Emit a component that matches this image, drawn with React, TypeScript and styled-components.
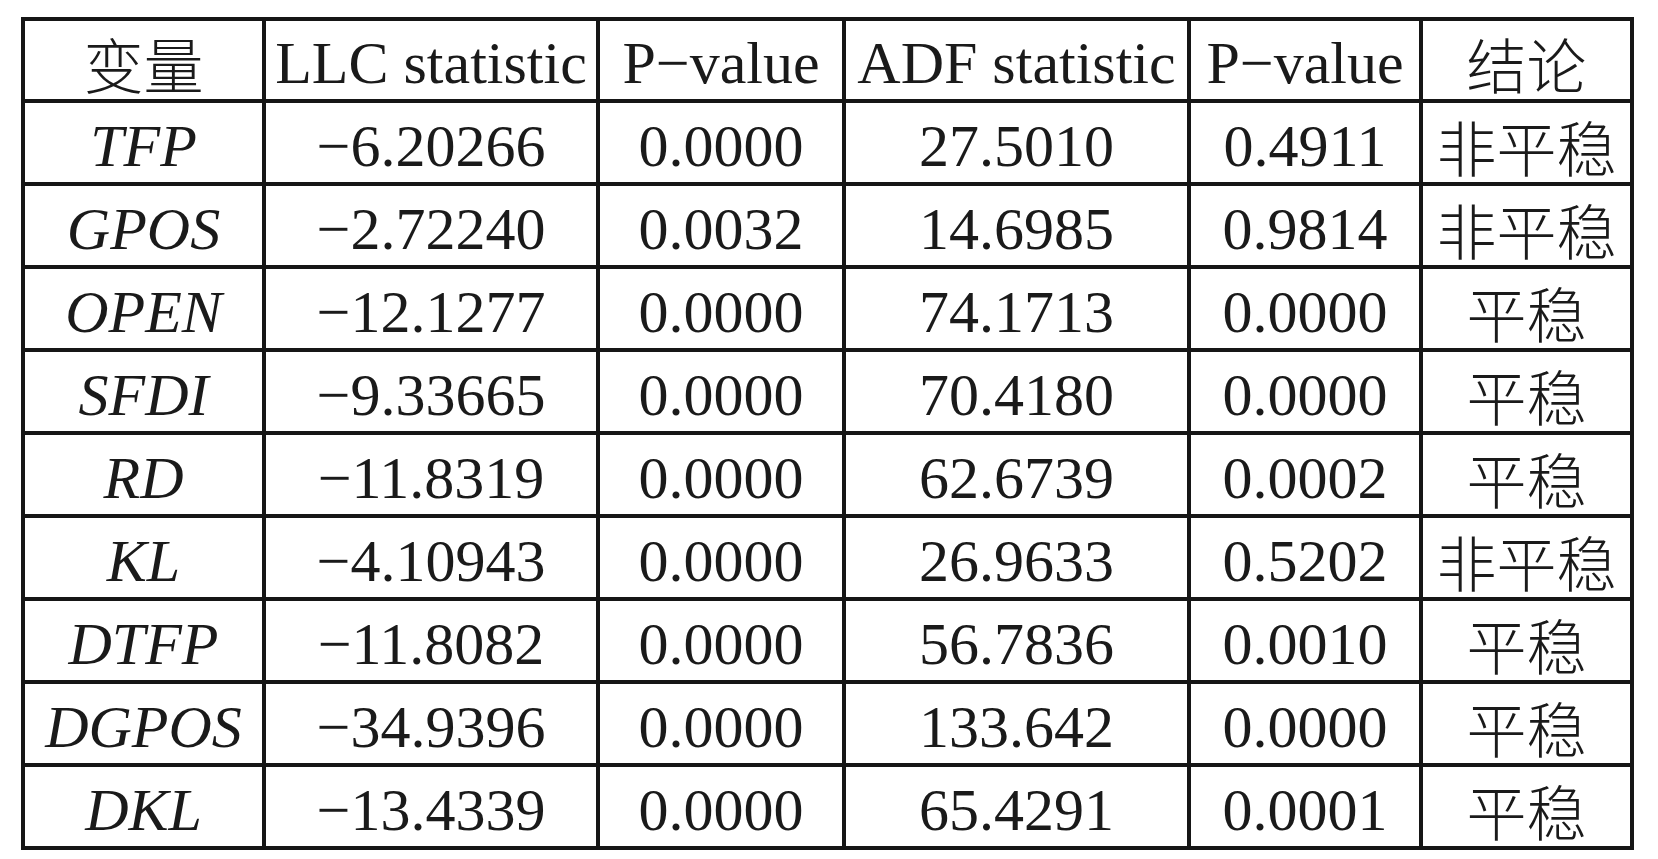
import React from "react";
import styled, { createGlobalStyle } from "styled-components";

const GlobalStyle = createGlobalStyle`
  html, body {
    margin: 0;
    padding: 0;
    background: #ffffff;
  }
  body {
    font-family: "Liberation Serif", "Times New Roman", serif;
  }
`;

const Page = styled.div`
  padding: 17px 0 0 21px;
`;

const Grid = styled.div`
  display: grid;
  grid-template-columns: 237px 330px 242px 341px 228px 207px;
  grid-template-rows: 78px;
  grid-auto-rows: 79px;
  gap: 4px;
  padding: 4px;
  background: #161616;
  width: fit-content;
`;

const Cell = styled.div<{ $italic?: boolean; $cjk?: boolean }>`
  background: #ffffff;
  display: flex;
  align-items: center;
  justify-content: center;
  padding-top: 6px;
  box-sizing: border-box;
  overflow: visible;
  white-space: nowrap;
  color: #1a1a1a;
  font-size: 60px;
  line-height: 1;
  font-style: ${(p) => (p.$italic ? "italic" : "normal")};
  font-family: ${(p) =>
    p.$cjk
      ? `"Noto Sans CJK SC", "Liberation Serif", sans-serif`
      : `"Liberation Serif", "Times New Roman", serif`};
  font-weight: ${(p) => (p.$cjk ? 300 : 400)};
`;

const headers: { text: string; cjk?: boolean }[] = [
  { text: "变量", cjk: true },
  { text: "LLC statistic" },
  { text: "P−value" },
  { text: "ADF statistic" },
  { text: "P−value" },
  { text: "结论", cjk: true },
];

const rows: [string, string, string, string, string, string][] = [
  ["TFP", "−6.20266", "0.0000", "27.5010", "0.4911", "非平稳"],
  ["GPOS", "−2.72240", "0.0032", "14.6985", "0.9814", "非平稳"],
  ["OPEN", "−12.1277", "0.0000", "74.1713", "0.0000", "平稳"],
  ["SFDI", "−9.33665", "0.0000", "70.4180", "0.0000", "平稳"],
  ["RD", "−11.8319", "0.0000", "62.6739", "0.0002", "平稳"],
  ["KL", "−4.10943", "0.0000", "26.9633", "0.5202", "非平稳"],
  ["DTFP", "−11.8082", "0.0000", "56.7836", "0.0010", "平稳"],
  ["DGPOS", "−34.9396", "0.0000", "133.642", "0.0000", "平稳"],
  ["DKL", "−13.4339", "0.0000", "65.4291", "0.0001", "平稳"],
];

export default function App() {
  return (
    <>
      <GlobalStyle />
      <Page>
        <Grid>
          {headers.map((h, i) => (
            <Cell key={`h${i}`} $cjk={h.cjk}>
              {h.text}
            </Cell>
          ))}
          {rows.map((r, ri) =>
            r.map((v, ci) => (
              <Cell
                key={`${ri}-${ci}`}
                $italic={ci === 0}
                $cjk={ci === 5}
              >
                {v}
              </Cell>
            ))
          )}
        </Grid>
      </Page>
    </>
  );
}
